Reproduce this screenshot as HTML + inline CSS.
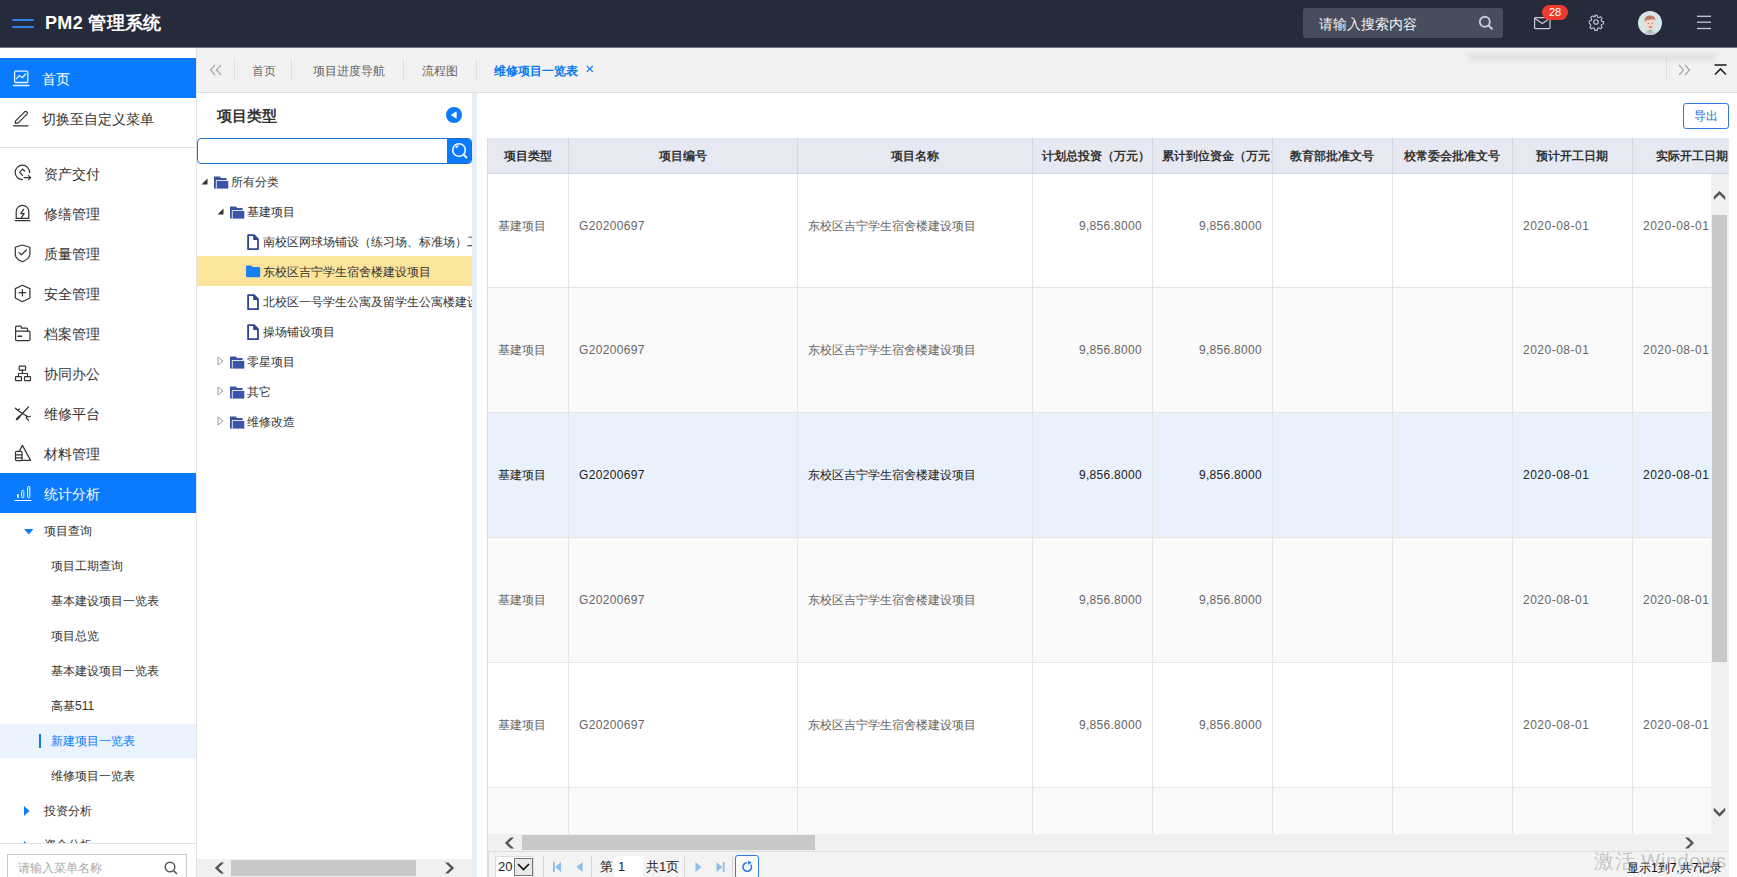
<!DOCTYPE html><html><head><meta charset="utf-8"><style>
*{box-sizing:border-box;margin:0;padding:0}
html,body{width:1737px;height:877px;overflow:hidden;background:#fff;font-family:"Liberation Sans",sans-serif;color:#333}
.a{position:absolute}
.nw{white-space:nowrap}
#hdr{left:0;top:0;width:1737px;height:48px;background:#262b3b}
.ham{left:12px;width:22px;height:2px;background:#2f80e8;border-radius:1px}
#title{left:45px;top:12px;font-size:18px;font-weight:bold;color:#fff;line-height:22px;letter-spacing:0.35px}
#srch{left:1303px;top:8px;width:200px;height:30px;background:#484d5d;border-radius:3px}
#side{left:0;top:48px;width:197px;height:829px;background:#fff;border-right:1px solid #e4e4e4;overflow:hidden}
.mi{position:absolute;left:0;width:196px;height:40px;font-size:14px;line-height:40px;color:#333}
.mi .t{position:absolute;left:44px;top:0;white-space:nowrap}
.mi svg{position:absolute;left:13px;top:12px}
.mi.on{background:#0a7bff;color:#fff}
.si{position:absolute;left:0;width:196px;height:35px;font-size:12px;line-height:35px;color:#333}
.si .t{position:absolute;left:51px;top:0;white-space:nowrap}
#tabs{left:197px;top:48px;width:1540px;height:45px;background:#f2f2f2;border-bottom:1px solid #dddddd;overflow:hidden}
.tab{position:absolute;top:15px;font-size:12px;line-height:16px;color:#666;white-space:nowrap}
.sep{position:absolute;top:12px;width:1px;height:22px;background:#e3e3e3}
#tree{left:197px;top:93px;width:275px;height:784px;background:#fff;overflow:hidden}
#split{left:472px;top:93px;width:5px;height:784px;background:#e4edf8}
#main{left:477px;top:93px;width:1260px;height:784px;background:#fff;overflow:hidden}
.tr{position:absolute;left:0;width:275px;height:30px;font-size:12px;line-height:30px;color:#333;white-space:nowrap;overflow:hidden}
.tr .t{position:absolute;top:0}
.th{position:absolute;top:0;height:35px;line-height:35px;font-size:12px;font-weight:bold;color:#333;text-align:center;white-space:nowrap;overflow:hidden;border-right:1px solid #d6d9e0}
.td{position:absolute;font-size:12px;color:#666;white-space:nowrap;overflow:hidden}
</style></head><body>
<div id="hdr" class="a">
<div class="a" style="left:0;top:47px;width:1737px;height:1px;background:#70737c"></div><div class="a ham" style="top:19px"></div><div class="a ham" style="top:26px"></div>
<div id="title" class="a nw">PM2 管理系统</div>
<div id="srch" class="a"><span class="a nw" style="left:16px;top:8px;font-size:14px;line-height:16px;color:#f2f2f2">请输入搜索内容</span><svg class="a" style="left:175px;top:7px" width="16" height="16" viewBox="0 0 16 16"><circle cx="6.8" cy="6.8" r="5" fill="none" stroke="#c9ccd4" stroke-width="1.9"/><line x1="10.5" y1="10.5" x2="13.8" y2="13.8" stroke="#c9ccd4" stroke-width="2.1" stroke-linecap="round"/></svg></div>
<svg class="a" style="left:1534px;top:17px" width="17" height="13" viewBox="0 0 17 13"><rect x="0.6" y="0.6" width="15.4" height="11" rx="1" fill="none" stroke="#c9ccd3" stroke-width="1.2"/><polyline points="1,1.4 8.3,6.4 15.6,1.4" fill="none" stroke="#c9ccd3" stroke-width="1.2"/></svg>
<div class="a" style="left:1542px;top:5px;width:26px;height:15px;border-radius:8px;background:#ee3a2f;color:#fff;font-size:11px;line-height:15px;text-align:center">28</div>
<svg class="a" style="left:1587px;top:13px" width="18" height="18" viewBox="0 0 24 24"><path fill="none" stroke="#c9ccd3" stroke-width="1.5" transform="translate(12 12) scale(0.9) translate(-12 -12)" d="M10.3 2h3.4l.6 2.9 1.9.8 2.5-1.6 2.4 2.4-1.6 2.5.8 1.9 2.9.6v3.4l-2.9.6-.8 1.9 1.6 2.5-2.4 2.4-2.5-1.6-1.9.8-.6 2.9h-3.4l-.6-2.9-1.9-.8-2.5 1.6-2.4-2.4 1.6-2.5-.8-1.9L2 13.7v-3.4l2.9-.6.8-1.9-1.6-2.5 2.4-2.4 2.5 1.6 1.9-.8z"/><circle cx="12" cy="12" r="3" fill="none" stroke="#c9ccd3" stroke-width="1.5"/></svg>
<svg class="a" style="left:1638px;top:11px" width="24" height="24" viewBox="0 0 24 24"><defs><clipPath id="cc"><circle cx="12" cy="12" r="12"/></clipPath></defs><circle cx="12" cy="12" r="12" fill="#d6e6e6"/><g clip-path="url(#cc)"><path d="M6 25 Q7 19 12 19 Q17 19 18 25Z" fill="#b7c9c9"/><path d="M11 19 L12 23 L13 19Z" fill="#8fa3a3"/><ellipse cx="12.3" cy="13" rx="4.6" ry="5.8" fill="#f4d6c6"/><path d="M6.8 11 Q6 5 11.5 4.6 Q17 4.4 17.6 9.5 Q16.5 8 14.5 8.2 Q12 9 9.5 8.4 Q8 9.5 6.8 11Z" fill="#be7a60"/><ellipse cx="12.5" cy="16" rx="1.7" ry="1.1" fill="#e0707a"/><circle cx="10.4" cy="12.3" r="0.5" fill="#6a4a40"/><circle cx="14.3" cy="12.3" r="0.5" fill="#6a4a40"/></g></svg>
<svg class="a" style="left:1696px;top:14px" width="16" height="16" viewBox="0 0 16 16" stroke="#c9ccd3" stroke-width="1.3"><line x1="1" y1="2.3" x2="15" y2="2.3"/><line x1="1" y1="8.2" x2="15" y2="8.2"/><line x1="1" y1="14.5" x2="15" y2="14.5"/></svg>
</div>
<div id="side" class="a">
<div class="a" style="left:0;top:10px;width:196px;height:40px;background:#0a7bff"></div>
<svg class="a" style="left:12px;top:20px" width="20" height="20" viewBox="12 68 20 20" fill="none" stroke="#e8f4ff" stroke-width="1.3" stroke-linecap="round" stroke-linejoin="round"><rect x="14.6" y="71.2" width="13.2" height="11.3" rx="1"/><polyline points="16.5,78.6 19.3,75.6 22.3,77.8 25.7,74"/><line x1="13.5" y1="85.5" x2="29" y2="85.5"/></svg>
<div class="a nw" style="left:42px;top:23px;font-size:14px;line-height:16px;color:#fff">首页</div>
<svg class="a" style="left:12px;top:60px" width="20" height="20" viewBox="12 108 20 20" fill="none" stroke="#333" stroke-width="1.2" stroke-linecap="round" stroke-linejoin="round"><path d="M15.2 123.2 L15.6 120.8 L24.6 111.8 Q25.6 111 26.6 111.8 L27 112.2 Q27.8 113.2 27 114.2 L18 123.2 Z"/><line x1="13.5" y1="125.8" x2="28" y2="125.8"/></svg>
<div class="a nw" style="left:42px;top:63px;font-size:14px;line-height:16px;color:#333">切换至自定义菜单</div>
<div class="a" style="left:0;top:99px;width:196px;height:1px;background:#e4e4e4"></div>
<svg class="a" style="left:12px;top:114px" width="22" height="20" viewBox="12 162 22 20" fill="none" stroke="#333" stroke-width="1.2" stroke-linecap="round" stroke-linejoin="round"><path d="M22.4 179.6 A7.2 7.2 0 1 1 29.6 172.4"/><polyline points="22.6,169.2 19.6,172.3 22.6,175.4"/><line x1="22.6" y1="169.2" x2="24.6" y2="171"/><line x1="24.2" y1="177.6" x2="30.6" y2="177.6"/><polyline points="28.6,175.6 30.6,177.6 28.6,179.6"/></svg>
<div class="a nw" style="left:44px;top:118px;font-size:14px;line-height:16px;color:#333">资产交付</div>
<svg class="a" style="left:12px;top:154px" width="22" height="22" viewBox="12 202 22 22" fill="none" stroke="#333" stroke-width="1.2" stroke-linecap="round" stroke-linejoin="round"><path d="M16.2 218.4 V211.6 A6.3 6.3 0 0 1 28.8 211.6 V218.4 Z"/><line x1="15.3" y1="220.6" x2="30" y2="220.6"/><polyline points="23.6,209.4 20.8,213.6 24.2,213.6 21.4,217.6"/></svg>
<div class="a nw" style="left:44px;top:158px;font-size:14px;line-height:16px;color:#333">修缮管理</div>
<svg class="a" style="left:12px;top:194px" width="22" height="22" viewBox="12 242 22 22" fill="none" stroke="#333" stroke-width="1.2" stroke-linecap="round" stroke-linejoin="round"><path d="M22.4 245 L29.9 247.3 V254.5 Q29.4 258.8 22.4 261.8 Q15.4 258.8 15.3 254.5 V247.3 Z"/><polyline points="19,252.6 21.4,254.8 26.4,250"/></svg>
<div class="a nw" style="left:44px;top:198px;font-size:14px;line-height:16px;color:#333">质量管理</div>
<svg class="a" style="left:12px;top:234px" width="22" height="22" viewBox="12 282 22 22" fill="none" stroke="#333" stroke-width="1.2" stroke-linecap="round" stroke-linejoin="round"><path d="M22.4 285.3 L29.9 288.6 V298 L22.4 301.7 L15.3 298 V288.6 Z"/><line x1="22.4" y1="289.6" x2="22.4" y2="295.8"/><line x1="19.1" y1="292.7" x2="25.7" y2="292.7"/></svg>
<div class="a nw" style="left:44px;top:238px;font-size:14px;line-height:16px;color:#333">安全管理</div>
<svg class="a" style="left:12px;top:275px" width="22" height="22" viewBox="12 323 22 22" fill="none" stroke="#333" stroke-width="1.2" stroke-linecap="round" stroke-linejoin="round"><path d="M15.6 331.2 V327.2 Q15.6 326.2 16.6 326.2 H20.6 Q21.4 326.2 21.4 327.2 V328.2 H26.6 Q27.6 328.2 27.6 329.2 V331.2"/><rect x="15.6" y="331.2" width="14.4" height="9.4" rx="1"/><line x1="18" y1="336.3" x2="21.6" y2="336.3" stroke-width="1.4"/></svg>
<div class="a nw" style="left:44px;top:278px;font-size:14px;line-height:16px;color:#333">档案管理</div>
<svg class="a" style="left:12px;top:315px" width="22" height="22" viewBox="12 363 22 22" fill="none" stroke="#333" stroke-width="1.2" stroke-linecap="round" stroke-linejoin="round"><rect x="19.2" y="366.2" width="6.4" height="4" rx="0.6"/><rect x="15.5" y="376.7" width="6" height="4" rx="0.6"/><rect x="24.5" y="376.7" width="6" height="4" rx="0.6"/><polyline points="22.4,370.2 22.4,373.5"/><polyline points="18.5,376.7 18.5,373.5 27.5,373.5 27.5,376.7"/></svg>
<div class="a nw" style="left:44px;top:318px;font-size:14px;line-height:16px;color:#333">协同办公</div>
<svg class="a" style="left:12px;top:354px" width="22" height="22" viewBox="12 402 22 22" fill="none" stroke="#333" stroke-width="1.2" stroke-linecap="round" stroke-linejoin="round"><line x1="28.5" y1="407" x2="19" y2="417"/><line x1="19.4" y1="416.6" x2="16.8" y2="419.2" stroke-width="2.2"/><path d="M15.4 408.2 L17.6 410.2 L19.4 409 M17.6 410.2 L28.2 417 M26.4 415.4 L26.4 418.2 L28.6 420.4 M28.2 417 L30.4 416.2"/></svg>
<div class="a nw" style="left:44px;top:358px;font-size:14px;line-height:16px;color:#333">维修平台</div>
<svg class="a" style="left:12px;top:394px" width="22" height="22" viewBox="12 442 22 22" fill="none" stroke="#333" stroke-width="1.2" stroke-linecap="round" stroke-linejoin="round"><polyline points="19.4,451 22.4,445.4 30.6,460.4 22,460.4"/><rect x="15.5" y="451.4" width="6.5" height="9.2" rx="1"/><line x1="15.5" y1="454.8" x2="22" y2="454.8"/><line x1="15.5" y1="457.8" x2="22" y2="457.8"/></svg>
<div class="a nw" style="left:44px;top:398px;font-size:14px;line-height:16px;color:#333">材料管理</div>
<div class="a" style="left:0;top:425px;width:196px;height:40px;background:#0a7bff"></div>
<svg class="a" style="left:12px;top:435px" width="22" height="20" viewBox="12 483 22 20" fill="none" stroke="#fff" stroke-width="1.2" stroke-linecap="round" stroke-linejoin="round"><rect x="17" y="494.2" width="1.8" height="3.6" fill="#fff" stroke="none"/><rect x="21.6" y="490.4" width="2.2" height="7.4" rx="1.1" stroke-width="1"/><rect x="27.6" y="486.4" width="2.2" height="11.4" rx="1.1" stroke-width="1"/><line x1="15" y1="500.5" x2="31" y2="500.5"/></svg>
<div class="a nw" style="left:44px;top:438px;font-size:14px;line-height:16px;color:#fff">统计分析</div>
<svg class="a" style="left:24px;top:481px" width="10" height="6" viewBox="0 0 10 6"><polygon points="0.2,0 9.4,0 4.8,5.4" fill="#0a7bff"/></svg>
<div class="a nw" style="left:44px;top:476px;font-size:12px;line-height:14px;color:#333">项目查询</div>
<div class="a nw" style="left:51px;top:511px;font-size:12px;line-height:14px;color:#333">项目工期查询</div>
<div class="a nw" style="left:51px;top:546px;font-size:12px;line-height:14px;color:#333">基本建设项目一览表</div>
<div class="a nw" style="left:51px;top:581px;font-size:12px;line-height:14px;color:#333">项目总览</div>
<div class="a nw" style="left:51px;top:616px;font-size:12px;line-height:14px;color:#333">基本建设项目一览表</div>
<div class="a nw" style="left:51px;top:651px;font-size:12px;line-height:14px;color:#333">高基511</div>
<div class="a" style="left:0;top:676px;width:196px;height:34px;background:#eaf3fe"></div>
<div class="a" style="left:39px;top:686px;width:2px;height:14px;background:#0a7bff"></div>
<div class="a nw" style="left:51px;top:686px;font-size:12px;line-height:14px;color:#0a7bff">新建项目一览表</div>
<div class="a nw" style="left:51px;top:721px;font-size:12px;line-height:14px;color:#333">维修项目一览表</div>
<svg class="a" style="left:24px;top:758px" width="6" height="10" viewBox="0 0 6 10"><polygon points="0,0 5.5,5 0,10" fill="#0a7bff"/></svg>
<div class="a nw" style="left:44px;top:756px;font-size:12px;line-height:14px;color:#333">投资分析</div>
<svg class="a" style="left:24px;top:793px" width="6" height="10" viewBox="0 0 6 10"><polygon points="0,0 5.5,5 0,10" fill="#0a7bff"/></svg>
<div class="a nw" style="left:44px;top:790px;font-size:12px;line-height:14px;color:#333">资金分析</div>
<div class="a" style="left:0;top:795px;width:196px;height:40px;background:#fff;border-top:1px solid #e4e4e4"></div>
<div class="a" style="left:7px;top:806px;width:180px;height:30px;border:1px solid #c9c9c9;background:#fff"></div>
<div class="a nw" style="left:18px;top:813px;font-size:12px;line-height:14px;color:#aaa">请输入菜单名称</div>
<svg class="a" style="left:164px;top:813px" width="14" height="14" viewBox="0 0 14 14"><circle cx="6" cy="6" r="4.8" fill="none" stroke="#555" stroke-width="1.4"/><line x1="9.5" y1="9.5" x2="13" y2="13" stroke="#555" stroke-width="1.5"/></svg>
</div>
<div id="tabs" class="a">
<svg class="a" style="left:12px;top:16px" width="14" height="12" viewBox="0 0 14 12" fill="none" stroke="#aaa" stroke-width="1.3"><polyline points="6,1 1.5,6 6,11"/><polyline points="12,1 7.5,6 12,11"/></svg>
<div class="a" style="left:37px;top:11px;width:1px;height:21px;background:#dedede"></div>
<div class="a" style="left:40px;top:11px;width:1px;height:21px;background:#ebebeb"></div>
<div class="a" style="left:94px;top:11px;width:1px;height:21px;background:#dedede"></div>
<div class="a" style="left:97px;top:11px;width:1px;height:21px;background:#ebebeb"></div>
<div class="a" style="left:206px;top:11px;width:1px;height:21px;background:#dedede"></div>
<div class="a" style="left:209px;top:11px;width:1px;height:21px;background:#ebebeb"></div>
<div class="a" style="left:279px;top:11px;width:1px;height:21px;background:#dedede"></div>
<div class="a" style="left:282px;top:11px;width:1px;height:21px;background:#ebebeb"></div>
<div class="a" style="left:1469px;top:11px;width:1px;height:21px;background:#dedede"></div>
<div class="a" style="left:1472px;top:11px;width:1px;height:21px;background:#ebebeb"></div>
<div class="a nw" style="left:55px;top:16px;font-size:12px;line-height:14px;color:#666;font-weight:normal">首页</div>
<div class="a nw" style="left:116px;top:16px;font-size:12px;line-height:14px;color:#666;font-weight:normal">项目进度导航</div>
<div class="a nw" style="left:225px;top:16px;font-size:12px;line-height:14px;color:#666;font-weight:normal">流程图</div>
<div class="a nw" style="left:297px;top:16px;font-size:12px;line-height:14px;color:#0a78f0;font-weight:bold">维修项目一览表</div>
<svg class="a" style="left:389px;top:17px" width="8" height="8" viewBox="0 0 8 8" stroke="#0a78f0" stroke-width="1.2"><line x1="0.8" y1="0.8" x2="6.8" y2="6.8"/><line x1="6.8" y1="0.8" x2="0.8" y2="6.8"/></svg>
<div class="a" style="left:1271px;top:6px;width:248px;height:6px;background:rgba(0,0,0,0.09);filter:blur(3px)"></div>
<svg class="a" style="left:1480px;top:16px" width="14" height="12" viewBox="0 0 14 12" fill="none" stroke="#aaa" stroke-width="1.3"><polyline points="2,1 6.5,6 2,11"/><polyline points="8,1 12.5,6 8,11"/></svg>
<svg class="a" style="left:1517px;top:16px" width="13" height="12" viewBox="0 0 13 12" fill="none" stroke="#222" stroke-width="1.6"><line x1="0.5" y1="1" x2="12.5" y2="1"/><polyline points="1,10.5 6.5,5 12,10.5"/></svg>
</div>
<div id="tree" class="a">
<div class="a nw" style="left:20px;top:14px;font-size:15px;line-height:17px;font-weight:bold;color:#333">项目类型</div>
<svg class="a" style="left:249px;top:14px" width="16" height="16" viewBox="0 0 16 16"><circle cx="8" cy="8" r="8" fill="#0a7bff"/><polygon points="4.6,8 10.6,4.2 10.6,11.8" fill="#fff"/></svg>
<div class="a" style="left:0;top:45px;width:275px;height:26px;border:1.5px solid #2170c8;border-radius:4px;background:#fff;overflow:hidden"><div class="a" style="right:0;top:0;width:24px;height:26px;background:#0a7bff"></div></div>
<svg class="a" style="left:254px;top:49px" width="18" height="18" viewBox="0 0 18 18" fill="none" stroke="#fff" stroke-width="1.5"><circle cx="8" cy="8" r="6.3"/><path d="M4.8 6 A3.5 3.5 0 0 1 7.5 4" /><line x1="12.5" y1="12.5" x2="16" y2="16" stroke-width="1.8"/></svg>
<svg class="a" style="left:4px;top:85px" width="7" height="7" viewBox="0 0 7 7"><polygon points="6.5,0.5 6.5,6.5 0.5,6.5" fill="#333"/></svg>
<svg class="a" style="left:17px;top:82.5px" width="15" height="13" viewBox="0 0 15 13"><path d="M0 0.4 H5.8 L7.2 2 H12.6 V4.2 H2.3 V12.6 H0 Z" fill="#3b54a8"/><rect x="2.3" y="4.6" width="12" height="8" fill="#3b54a8"/><polyline points="2.3,12.6 2.3,4.5 14.3,4.5" fill="none" stroke="#fff" stroke-width="0.7"/></svg>
<div class="a nw" style="left:34px;top:82px;font-size:12px;line-height:14px;color:#333">所有分类</div>
<svg class="a" style="left:20px;top:115px" width="7" height="7" viewBox="0 0 7 7"><polygon points="6.5,0.5 6.5,6.5 0.5,6.5" fill="#333"/></svg>
<svg class="a" style="left:33px;top:112.5px" width="15" height="13" viewBox="0 0 15 13"><path d="M0 0.4 H5.8 L7.2 2 H12.6 V4.2 H2.3 V12.6 H0 Z" fill="#3b54a8"/><rect x="2.3" y="4.6" width="12" height="8" fill="#3b54a8"/><polyline points="2.3,12.6 2.3,4.5 14.3,4.5" fill="none" stroke="#fff" stroke-width="0.7"/></svg>
<div class="a nw" style="left:50px;top:112px;font-size:12px;line-height:14px;color:#333">基建项目</div>
<svg class="a" style="left:50px;top:140.5px" width="13" height="17" viewBox="0 0 13 17" fill="#fff" stroke="#2f4595" stroke-width="1.8" stroke-linejoin="round"><path d="M1.1 1.1 H7 L11 5.2 V15.2 H1.1 Z"/><path d="M6.8 1.2 V5.3 H10.9" fill="#2f4595" stroke-width="1.2"/></svg>
<div class="a nw" style="left:66px;top:142px;font-size:12px;line-height:14px;color:#333">南校区网球场铺设（练习场、标准场）工程</div>
<div class="a" style="left:0;top:163px;width:275px;height:30px;background:#fde49b"></div>
<svg class="a" style="left:49px;top:171.5px" width="15" height="13" viewBox="0 0 15 13"><path d="M0 1.6 Q0 0.5 1 0.5 H5.2 L6.8 2.1 H13 Q14.2 2.1 14.2 3.2 V11.2 Q14.2 12.3 13 12.3 H1.1 Q0 12.3 0 11.2 Z" fill="#1a80f2"/></svg>
<div class="a nw" style="left:66px;top:172px;font-size:12px;line-height:14px;color:#333">东校区吉宁学生宿舍楼建设项目</div>
<svg class="a" style="left:50px;top:200.5px" width="13" height="17" viewBox="0 0 13 17" fill="#fff" stroke="#2f4595" stroke-width="1.8" stroke-linejoin="round"><path d="M1.1 1.1 H7 L11 5.2 V15.2 H1.1 Z"/><path d="M6.8 1.2 V5.3 H10.9" fill="#2f4595" stroke-width="1.2"/></svg>
<div class="a nw" style="left:66px;top:202px;font-size:12px;line-height:14px;color:#333">北校区一号学生公寓及留学生公寓楼建设项目</div>
<svg class="a" style="left:50px;top:230.5px" width="13" height="17" viewBox="0 0 13 17" fill="#fff" stroke="#2f4595" stroke-width="1.8" stroke-linejoin="round"><path d="M1.1 1.1 H7 L11 5.2 V15.2 H1.1 Z"/><path d="M6.8 1.2 V5.3 H10.9" fill="#2f4595" stroke-width="1.2"/></svg>
<div class="a nw" style="left:66px;top:232px;font-size:12px;line-height:14px;color:#333">操场铺设项目</div>
<svg class="a" style="left:20px;top:263px" width="7" height="10" viewBox="0 0 7 10"><polygon points="1,1 6,5 1,9" fill="none" stroke="#999" stroke-width="1"/></svg>
<svg class="a" style="left:33px;top:262.5px" width="15" height="13" viewBox="0 0 15 13"><path d="M0 0.4 H5.8 L7.2 2 H12.6 V4.2 H2.3 V12.6 H0 Z" fill="#3b54a8"/><rect x="2.3" y="4.6" width="12" height="8" fill="#3b54a8"/><polyline points="2.3,12.6 2.3,4.5 14.3,4.5" fill="none" stroke="#fff" stroke-width="0.7"/></svg>
<div class="a nw" style="left:50px;top:262px;font-size:12px;line-height:14px;color:#333">零星项目</div>
<svg class="a" style="left:20px;top:293px" width="7" height="10" viewBox="0 0 7 10"><polygon points="1,1 6,5 1,9" fill="none" stroke="#999" stroke-width="1"/></svg>
<svg class="a" style="left:33px;top:292.5px" width="15" height="13" viewBox="0 0 15 13"><path d="M0 0.4 H5.8 L7.2 2 H12.6 V4.2 H2.3 V12.6 H0 Z" fill="#3b54a8"/><rect x="2.3" y="4.6" width="12" height="8" fill="#3b54a8"/><polyline points="2.3,12.6 2.3,4.5 14.3,4.5" fill="none" stroke="#fff" stroke-width="0.7"/></svg>
<div class="a nw" style="left:50px;top:292px;font-size:12px;line-height:14px;color:#333">其它</div>
<svg class="a" style="left:20px;top:323px" width="7" height="10" viewBox="0 0 7 10"><polygon points="1,1 6,5 1,9" fill="none" stroke="#999" stroke-width="1"/></svg>
<svg class="a" style="left:33px;top:322.5px" width="15" height="13" viewBox="0 0 15 13"><path d="M0 0.4 H5.8 L7.2 2 H12.6 V4.2 H2.3 V12.6 H0 Z" fill="#3b54a8"/><rect x="2.3" y="4.6" width="12" height="8" fill="#3b54a8"/><polyline points="2.3,12.6 2.3,4.5 14.3,4.5" fill="none" stroke="#fff" stroke-width="0.7"/></svg>
<div class="a nw" style="left:50px;top:322px;font-size:12px;line-height:14px;color:#333">维修改造</div>
<div class="a" style="left:0;top:766px;width:275px;height:18px;background:#f0f0f0"></div>
<div class="a" style="left:34px;top:767px;width:185px;height:16px;background:#c8c8c8"></div>
<svg class="a" style="left:17px;top:769px" width="11" height="12" viewBox="0 0 11 12"><polygon points="10,0.5 4.3,6 10,11.5 6.6,11.5 0.9,6 6.6,0.5" fill="#555"/></svg>
<svg class="a" style="left:247px;top:769px" width="11" height="12" viewBox="0 0 11 12"><polygon points="1,0.5 6.7,6 1,11.5 4.4,11.5 10.1,6 4.4,0.5" fill="#555"/></svg>
</div>
<div id="split" class="a"></div>
<div id="main" class="a">
<div class="a" style="left:1206px;top:10px;width:46px;height:26px;border:1px solid #2f7be0;border-radius:3px;background:#fff;font-size:12px;line-height:24px;text-align:center;color:#1a6fd6">导出</div>
<div class="a" style="left:10px;top:45px;width:1px;height:739px;background:#dcdcdc"></div>
<div class="a" style="left:11px;top:45px;width:1241px;height:713px;overflow:hidden;background:#fff">
<div class="a" style="left:0;top:0;width:1241px;height:36px;background:#e6e9f1;border-bottom:1px solid #d5d8df"></div>
<div class="a nw" style="left:0px;top:0;width:80px;height:35px;line-height:36px;padding:0 10px;font-size:12px;font-weight:bold;color:#333;text-align:center;overflow:hidden">项目类型</div>
<div class="a" style="left:80px;top:0;width:1px;height:36px;background:#d3d6dd"></div>
<div class="a nw" style="left:80px;top:0;width:229px;height:35px;line-height:36px;padding:0 10px;font-size:12px;font-weight:bold;color:#333;text-align:center;overflow:hidden">项目编号</div>
<div class="a" style="left:309px;top:0;width:1px;height:36px;background:#d3d6dd"></div>
<div class="a nw" style="left:309px;top:0;width:235px;height:35px;line-height:36px;padding:0 10px;font-size:12px;font-weight:bold;color:#333;text-align:center;overflow:hidden">项目名称</div>
<div class="a" style="left:544px;top:0;width:1px;height:36px;background:#d3d6dd"></div>
<div class="a nw" style="left:544px;top:0;width:120px;height:35px;line-height:36px;padding:0 10px;font-size:12px;font-weight:bold;color:#333;text-align:center;overflow:hidden">计划总投资（万元）</div>
<div class="a" style="left:664px;top:0;width:1px;height:36px;background:#d3d6dd"></div>
<div class="a nw" style="left:664px;top:0;width:120px;height:35px;line-height:36px;padding:0 10px;font-size:12px;font-weight:bold;color:#333;text-align:center;overflow:hidden">累计到位资金（万元）</div>
<div class="a" style="left:784px;top:0;width:1px;height:36px;background:#d3d6dd"></div>
<div class="a nw" style="left:784px;top:0;width:120px;height:35px;line-height:36px;padding:0 10px;font-size:12px;font-weight:bold;color:#333;text-align:center;overflow:hidden">教育部批准文号</div>
<div class="a" style="left:904px;top:0;width:1px;height:36px;background:#d3d6dd"></div>
<div class="a nw" style="left:904px;top:0;width:120px;height:35px;line-height:36px;padding:0 10px;font-size:12px;font-weight:bold;color:#333;text-align:center;overflow:hidden">校常委会批准文号</div>
<div class="a" style="left:1024px;top:0;width:1px;height:36px;background:#d3d6dd"></div>
<div class="a nw" style="left:1024px;top:0;width:120px;height:35px;line-height:36px;padding:0 10px;font-size:12px;font-weight:bold;color:#333;text-align:center;overflow:hidden">预计开工日期</div>
<div class="a" style="left:1144px;top:0;width:1px;height:36px;background:#d3d6dd"></div>
<div class="a nw" style="left:1144px;top:0;width:120px;height:35px;line-height:36px;padding:0 10px;font-size:12px;font-weight:bold;color:#333;text-align:center;overflow:hidden">实际开工日期</div>
<div class="a" style="left:1264px;top:0;width:1px;height:36px;background:#d3d6dd"></div>
<div class="a" style="left:0;top:36px;width:1241px;height:114px;background:#fff;border-bottom:1px solid #e5e5e5"></div>
<div class="a" style="left:0;top:150px;width:1241px;height:125px;background:#fafafa;border-bottom:1px solid #e5e5e5"></div>
<div class="a" style="left:0;top:275px;width:1241px;height:125px;background:#e9f1fd;border-bottom:1px solid #e5e5e5"></div>
<div class="a" style="left:0;top:400px;width:1241px;height:125px;background:#fafafa;border-bottom:1px solid #e5e5e5"></div>
<div class="a" style="left:0;top:525px;width:1241px;height:125px;background:#fff;border-bottom:1px solid #e5e5e5"></div>
<div class="a" style="left:0;top:650px;width:1241px;height:125px;background:#fafafa;border-bottom:1px solid #e5e5e5"></div>
<div class="a" style="left:80px;top:36px;width:1px;height:700px;background:#e5e5e5"></div>
<div class="a" style="left:309px;top:36px;width:1px;height:700px;background:#e5e5e5"></div>
<div class="a" style="left:544px;top:36px;width:1px;height:700px;background:#e5e5e5"></div>
<div class="a" style="left:664px;top:36px;width:1px;height:700px;background:#e5e5e5"></div>
<div class="a" style="left:784px;top:36px;width:1px;height:700px;background:#e5e5e5"></div>
<div class="a" style="left:904px;top:36px;width:1px;height:700px;background:#e5e5e5"></div>
<div class="a" style="left:1024px;top:36px;width:1px;height:700px;background:#e5e5e5"></div>
<div class="a" style="left:1144px;top:36px;width:1px;height:700px;background:#e5e5e5"></div>
<div class="a nw" style="left:10px;top:81px;font-size:12px;line-height:14px;color:#666">基建项目</div>
<div class="a nw" style="left:91px;top:81px;font-size:12px;line-height:14px;letter-spacing:0.35px;color:#666">G20200697</div>
<div class="a nw" style="left:320px;top:81px;font-size:12px;line-height:14px;color:#666">东校区吉宁学生宿舍楼建设项目</div>
<div class="a nw" style="left:544px;width:110px;text-align:right;top:81px;font-size:12px;line-height:14px;letter-spacing:0.3px;color:#666">9,856.8000</div>
<div class="a nw" style="left:664px;width:110px;text-align:right;top:81px;font-size:12px;line-height:14px;letter-spacing:0.3px;color:#666">9,856.8000</div>
<div class="a nw" style="left:1035px;top:81px;font-size:12px;line-height:14px;letter-spacing:0.5px;color:#666">2020-08-01</div>
<div class="a nw" style="left:1155px;top:81px;font-size:12px;line-height:14px;letter-spacing:0.5px;color:#666">2020-08-01</div>
<div class="a nw" style="left:10px;top:205px;font-size:12px;line-height:14px;color:#666">基建项目</div>
<div class="a nw" style="left:91px;top:205px;font-size:12px;line-height:14px;letter-spacing:0.35px;color:#666">G20200697</div>
<div class="a nw" style="left:320px;top:205px;font-size:12px;line-height:14px;color:#666">东校区吉宁学生宿舍楼建设项目</div>
<div class="a nw" style="left:544px;width:110px;text-align:right;top:205px;font-size:12px;line-height:14px;letter-spacing:0.3px;color:#666">9,856.8000</div>
<div class="a nw" style="left:664px;width:110px;text-align:right;top:205px;font-size:12px;line-height:14px;letter-spacing:0.3px;color:#666">9,856.8000</div>
<div class="a nw" style="left:1035px;top:205px;font-size:12px;line-height:14px;letter-spacing:0.5px;color:#666">2020-08-01</div>
<div class="a nw" style="left:1155px;top:205px;font-size:12px;line-height:14px;letter-spacing:0.5px;color:#666">2020-08-01</div>
<div class="a nw" style="left:10px;top:330px;font-size:12px;line-height:14px;color:#222">基建项目</div>
<div class="a nw" style="left:91px;top:330px;font-size:12px;line-height:14px;letter-spacing:0.35px;color:#222">G20200697</div>
<div class="a nw" style="left:320px;top:330px;font-size:12px;line-height:14px;color:#222">东校区吉宁学生宿舍楼建设项目</div>
<div class="a nw" style="left:544px;width:110px;text-align:right;top:330px;font-size:12px;line-height:14px;letter-spacing:0.3px;color:#222">9,856.8000</div>
<div class="a nw" style="left:664px;width:110px;text-align:right;top:330px;font-size:12px;line-height:14px;letter-spacing:0.3px;color:#222">9,856.8000</div>
<div class="a nw" style="left:1035px;top:330px;font-size:12px;line-height:14px;letter-spacing:0.5px;color:#222">2020-08-01</div>
<div class="a nw" style="left:1155px;top:330px;font-size:12px;line-height:14px;letter-spacing:0.5px;color:#222">2020-08-01</div>
<div class="a nw" style="left:10px;top:455px;font-size:12px;line-height:14px;color:#666">基建项目</div>
<div class="a nw" style="left:91px;top:455px;font-size:12px;line-height:14px;letter-spacing:0.35px;color:#666">G20200697</div>
<div class="a nw" style="left:320px;top:455px;font-size:12px;line-height:14px;color:#666">东校区吉宁学生宿舍楼建设项目</div>
<div class="a nw" style="left:544px;width:110px;text-align:right;top:455px;font-size:12px;line-height:14px;letter-spacing:0.3px;color:#666">9,856.8000</div>
<div class="a nw" style="left:664px;width:110px;text-align:right;top:455px;font-size:12px;line-height:14px;letter-spacing:0.3px;color:#666">9,856.8000</div>
<div class="a nw" style="left:1035px;top:455px;font-size:12px;line-height:14px;letter-spacing:0.5px;color:#666">2020-08-01</div>
<div class="a nw" style="left:1155px;top:455px;font-size:12px;line-height:14px;letter-spacing:0.5px;color:#666">2020-08-01</div>
<div class="a nw" style="left:10px;top:580px;font-size:12px;line-height:14px;color:#666">基建项目</div>
<div class="a nw" style="left:91px;top:580px;font-size:12px;line-height:14px;letter-spacing:0.35px;color:#666">G20200697</div>
<div class="a nw" style="left:320px;top:580px;font-size:12px;line-height:14px;color:#666">东校区吉宁学生宿舍楼建设项目</div>
<div class="a nw" style="left:544px;width:110px;text-align:right;top:580px;font-size:12px;line-height:14px;letter-spacing:0.3px;color:#666">9,856.8000</div>
<div class="a nw" style="left:664px;width:110px;text-align:right;top:580px;font-size:12px;line-height:14px;letter-spacing:0.3px;color:#666">9,856.8000</div>
<div class="a nw" style="left:1035px;top:580px;font-size:12px;line-height:14px;letter-spacing:0.5px;color:#666">2020-08-01</div>
<div class="a nw" style="left:1155px;top:580px;font-size:12px;line-height:14px;letter-spacing:0.5px;color:#666">2020-08-01</div>
<div class="a" style="left:1223px;top:36px;width:18px;height:660px;background:#f0f0f0"></div>
<div class="a" style="left:1224px;top:77px;width:15px;height:447px;background:#c8c8c8"></div>
<svg class="a" style="left:1225px;top:52px" width="13" height="11" viewBox="0 0 13 11"><polygon points="0.8,6.6 6.5,0.9 12.2,6.6 12.2,10 6.5,4.4 0.8,10" fill="#555"/></svg>
<svg class="a" style="left:1225px;top:669px" width="13" height="11" viewBox="0 0 13 11"><polygon points="0.8,0.6 6.5,6.3 12.2,0.6 12.2,4 6.5,9.7 0.8,4" fill="#555"/></svg>
<div class="a" style="left:0;top:696px;width:1241px;height:17px;background:#f0f0f0"></div>
<div class="a" style="left:34px;top:697px;width:293px;height:15px;background:#c8c8c8"></div>
<svg class="a" style="left:16px;top:699px" width="11" height="12" viewBox="0 0 11 12"><polygon points="10,0.5 4.3,6 10,11.5 6.6,11.5 0.9,6 6.6,0.5" fill="#555"/></svg>
<svg class="a" style="left:1196px;top:699px" width="11" height="12" viewBox="0 0 11 12"><polygon points="1,0.5 6.7,6 1,11.5 4.4,11.5 10.1,6 4.4,0.5" fill="#555"/></svg>
</div>
<div class="a" style="left:11px;top:758px;width:1241px;height:26px;background:#f3f3f3;border-top:1px solid #dedede;border-left:1px solid #dcdcdc"></div>
<div class="a" style="left:18px;top:763px;width:39px;height:22px;background:#fff;border:1px solid #ddd"></div>
<div class="a nw" style="left:21px;top:766px;font-size:13px;line-height:15px;color:#222">20</div>
<div class="a" style="left:37px;top:765px;width:19px;height:18px;background:#e9e9e9;border:1px solid #777"></div>
<svg class="a" style="left:40px;top:770px" width="13" height="8" viewBox="0 0 13 8" fill="none" stroke="#111" stroke-width="1.6"><polyline points="1,1 6.5,6.5 12,1"/></svg>
<div class="a" style="left:66px;top:763px;width:1px;height:21px;background:#d5d5d5"></div>
<div class="a" style="left:114px;top:763px;width:1px;height:21px;background:#d5d5d5"></div>
<div class="a" style="left:207px;top:763px;width:1px;height:21px;background:#d5d5d5"></div>
<div class="a" style="left:255px;top:763px;width:1px;height:21px;background:#d5d5d5"></div>
<svg class="a" style="left:76px;top:769px" width="9" height="10" viewBox="0 0 9 10"><rect x="0" y="0" width="1.8" height="10" fill="#8dbde8"/><polygon points="8,0 8,10 2.3,5" fill="#8dbde8"/></svg>
<svg class="a" style="left:99px;top:769px" width="7" height="10" viewBox="0 0 7 10"><polygon points="6.5,0 6.5,10 0.5,5" fill="#8dbde8"/></svg>
<div class="a nw" style="left:123px;top:766px;font-size:13px;line-height:15px;color:#222">第</div>
<div class="a" style="left:137px;top:763px;width:29px;height:22px;background:#fff"></div>
<div class="a nw" style="left:141px;top:766px;font-size:13px;line-height:15px;color:#222">1</div>
<div class="a nw" style="left:169px;top:766px;font-size:13px;line-height:15px;color:#222">共1页</div>
<svg class="a" style="left:218px;top:769px" width="7" height="10" viewBox="0 0 7 10"><polygon points="0.5,0 0.5,10 6.5,5" fill="#8dbde8"/></svg>
<svg class="a" style="left:239px;top:769px" width="9" height="10" viewBox="0 0 9 10"><polygon points="0.5,0 0.5,10 6.2,5" fill="#8dbde8"/><rect x="6.8" y="0" width="1.8" height="10" fill="#8dbde8"/></svg>
<div class="a" style="left:258px;top:762px;width:24px;height:24px;border:1px solid #2f7be0;border-radius:3px;background:#fafafa"></div>
<svg class="a" style="left:263px;top:767px" width="14" height="14" viewBox="0 0 14 14" fill="none" stroke="#2a7fe0" stroke-width="1.6"><path d="M10.8 4.6 A4.3 4.3 0 1 1 7 2.7"/><polygon points="7.8,0.6 11.6,2.4 8.2,5" fill="#2a7fe0" stroke="none"/></svg>
<div class="a nw" style="left:1117px;top:756px;font-size:20px;line-height:24px;letter-spacing:0.6px;color:rgba(160,160,160,0.55)">激活 Windows</div>
<div class="a nw" style="left:1150px;top:768px;font-size:12px;line-height:14px;color:#111">显示1到7,共7记录</div>
</div>
</body></html>
